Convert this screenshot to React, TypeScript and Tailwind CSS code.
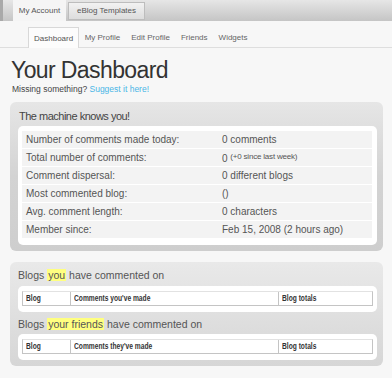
import React from "react";

const stats: [string, React.ReactNode][] = [
  ["Number of comments made today:", "0 comments"],
  [
    "Total number of comments:",
    <>
      <span className="relative top-[1px]">0</span>{" "}
      <sup className="text-[8px] tracking-[-0.2px] relative -top-[2px]">(+0 since last week)</sup>
    </>,
  ],
  ["Comment dispersal:", "0 different blogs"],
  ["Most commented blog:", "()"],
  ["Avg. comment length:", "0 characters"],
  ["Member since:", "Feb 15, 2008 (2 hours ago)"],
];

const subTabs = ["Dashboard", "My Profile", "Edit Profile", "Friends", "Widgets"];

// header labels in the shot are a tight, condensed bold
const Narrow = ({ children }: { children: React.ReactNode }) => (
  <span className="inline-block origin-left scale-x-[0.74] whitespace-nowrap">{children}</span>
);

const BlogTable = ({ middle }: { middle: string }) => (
  <div className="bg-white rounded-[5px] px-1 pt-[5px] pb-[6px]">
    <div className="grid grid-cols-[47px_208px_1fr] h-[15px] border border-[#c4c4c4] border-t-[#e2e2e2] text-[9px] font-bold text-[#333]">
      <div className="pl-[3px] flex items-center">
        <Narrow>Blog</Narrow>
      </div>
      <div className="pl-[3px] flex items-center border-l border-[#c4c4c4]">
        <Narrow>{middle}</Narrow>
      </div>
      <div className="pl-[3px] flex items-center border-l border-[#c4c4c4]">
        <Narrow>Blog totals</Narrow>
      </div>
    </div>
  </div>
);

export default function App() {
  return (
    <div className="w-[392px] h-[378px] overflow-hidden bg-[#f7f7f7] font-['Liberation_Sans',Arial,sans-serif] text-[#444]">
      {/* top account tabs */}
      <div className="h-[21px] flex items-end gap-[2px] pl-[10px] border-l-[3px] border-[#a9a9a9] bg-gradient-to-b from-[#e6e6e6] to-[#c5c5c5]">
        <div className="w-[53px] h-[21px] bg-[#f5f5f5] flex items-center justify-center text-[8px] text-[#555]">
          My Account
        </div>
        <div className="w-[77px] h-[18px] mb-[1px] border border-[#bdbdbd] bg-gradient-to-b from-[#f2f2f2] to-[#dddddd] flex items-center justify-center text-[8px] text-[#555]">
          eBlog Templates
        </div>
      </div>

      {/* sub tabs */}
      <div className="h-[27px] flex items-end pl-[28px] border-b border-[#dedede]">
        {subTabs.map((t, i) =>
          i === 0 ? (
            <div
              key={t}
              className="h-[21px] px-[5px] pt-[1px] -mb-px bg-[#fcfcfc] border border-b-0 border-[#d8d8d8] flex items-center text-[8px] text-[#555]"
            >
              {t}
            </div>
          ) : (
            <div key={t} className="h-[21px] px-[5.5px] pt-[2px] flex items-center text-[8px] text-[#666]">
              {t}
            </div>
          )
        )}
      </div>

      <h1 className="mt-[9px] pl-[11px] text-[23px] leading-[26px] tracking-[-0.6px] text-[#333]">
        Your Dashboard
      </h1>
      <p className="pl-[12px] text-[8.5px] leading-[12px] text-[#444]">
        Missing something? <span className="text-[#4ab6e6]">Suggest it here!</span>
      </p>

      {/* stats panel */}
      <div className="mt-[7px] ml-[10px] w-[373px] rounded-[6px] bg-gradient-to-b from-[#e6e6e6] via-[#d3d3d3] to-[#cecece] pl-2 pr-[6px] pt-[7px] pb-[6px]">
        <div className="pl-[1px] text-[11px] leading-[14px] tracking-[-0.5px] text-[#444]">
          The machine knows you!
        </div>
        <div className="mt-[3px] bg-white rounded-[5px] pl-1 pr-[5px] pt-[5px] pb-[6px]">
          {stats.map(([label, value]) => (
            <div
              key={label}
              className="grid grid-cols-[200px_1fr] h-[17px] mb-px bg-[#f3f3f3] text-[10px] text-[#555] items-center"
            >
              <div className="pl-1">{label}</div>
              <div>{value}</div>
            </div>
          ))}
        </div>
      </div>

      {/* blogs panel */}
      <div className="mt-[11px] ml-[10px] w-[373px] rounded-[6px] bg-gradient-to-b from-[#e9e9e9] to-[#d6d6d6] pl-2 pr-[6px] pt-[6px] pb-[6px]">
        <div className="text-[10.5px] leading-[14px] text-[#555]">
          Blogs <span className="bg-[#ffff80] px-[1px]">you</span> have commented on
        </div>
        <div className="mt-[4px]">
          <BlogTable middle="Comments you've made" />
        </div>
        <div className="mt-[5px] text-[10.5px] leading-[14px] text-[#555]">
          Blogs <span className="bg-[#ffff80] px-[1px]">your friends</span> have commented on
        </div>
        <div className="mt-[3px]">
          <BlogTable middle="Comments they've made" />
        </div>
      </div>
    </div>
  );
}
